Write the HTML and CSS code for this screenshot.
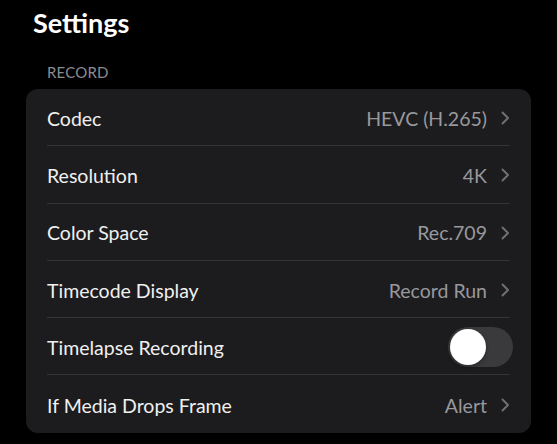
FILE: index.html
```html
<!DOCTYPE html>
<html>
<head>
<meta charset="utf-8">
<link rel="stylesheet" href="styles.css">
</head>
<body>
<div class="page">
  <h1 class="title">Settings</h1>
  <div class="section-label">RECORD</div>
  <div class="card">
    <div class="row"><span class="label">Codec</span><span class="value">HEVC (H.265)</span><svg class="chev" viewBox="0 0 9 14"><path d="M1.5 1.5 L7 7 L1.5 12.5"/></svg></div>
    <div class="row"><span class="label">Resolution</span><span class="value">4K</span><svg class="chev" viewBox="0 0 9 14"><path d="M1.5 1.5 L7 7 L1.5 12.5"/></svg></div>
    <div class="row"><span class="label">Color Space</span><span class="value">Rec.709</span><svg class="chev" viewBox="0 0 9 14"><path d="M1.5 1.5 L7 7 L1.5 12.5"/></svg></div>
    <div class="row"><span class="label">Timecode Display</span><span class="value">Record Run</span><svg class="chev" viewBox="0 0 9 14"><path d="M1.5 1.5 L7 7 L1.5 12.5"/></svg></div>
    <div class="row"><span class="label">Timelapse Recording</span><span class="toggle"><span class="knob"></span></span></div>
    <div class="row"><span class="label">If Media Drops Frame</span><span class="value">Alert</span><svg class="chev" viewBox="0 0 9 14"><path d="M1.5 1.5 L7 7 L1.5 12.5"/></svg></div>
  </div>
</div>
</body>
</html>
```
FILE: styles.css
```css
html, body {
  margin: 0;
  padding: 0;
  background: #000;
}
body {
  font-family: Lato, "Noto Sans", sans-serif;
  color: #f2f2f2;
}
.page {
  padding: 6px 26px 0 26px;
  width: 505px;
}
.title {
  margin: 0 0 0 7px;
  font-size: 27px;
  font-weight: 700;
  line-height: 34px;
  color: #fff;
}
.section-label {
  margin: 23px 0 0 21px;
  font-size: 15px;
  line-height: 18px;
  color: #8c8c90;
  letter-spacing: 0.2px;
}
.card {
  margin-top: 8px;
  background: #1c1c1e;
  border-radius: 12px;
  padding: 0 21px 0 21px;
}
.row {
  height: 57.3px;
  display: flex;
  align-items: center;
  border-bottom: 1px solid #353537;
  box-sizing: border-box;
  font-size: 19.5px;
  padding-top: 2px;
}
.row:last-child {
  border-bottom: none;
}
.label {
  flex: 1;
  color: #f0f0f0;
}
.value {
  color: #98989d;
  margin-right: 14px;
}
.chev {
  width: 9px;
  height: 14px;
  fill: none;
  stroke: #6f6f74;
  stroke-width: 2;
  stroke-linecap: round;
  stroke-linejoin: round;
}
.toggle {
  width: 65px;
  height: 40px;
  border-radius: 20px;
  background: #3a3a3d;
  margin-right: -3px;
  display: flex;
  align-items: center;
  padding-left: 2px;
  box-sizing: border-box;
}
.knob {
  width: 36px;
  height: 36px;
  border-radius: 50%;
  background: #fff;
  box-shadow: 0 2px 4px rgba(0,0,0,0.3);
}
```
